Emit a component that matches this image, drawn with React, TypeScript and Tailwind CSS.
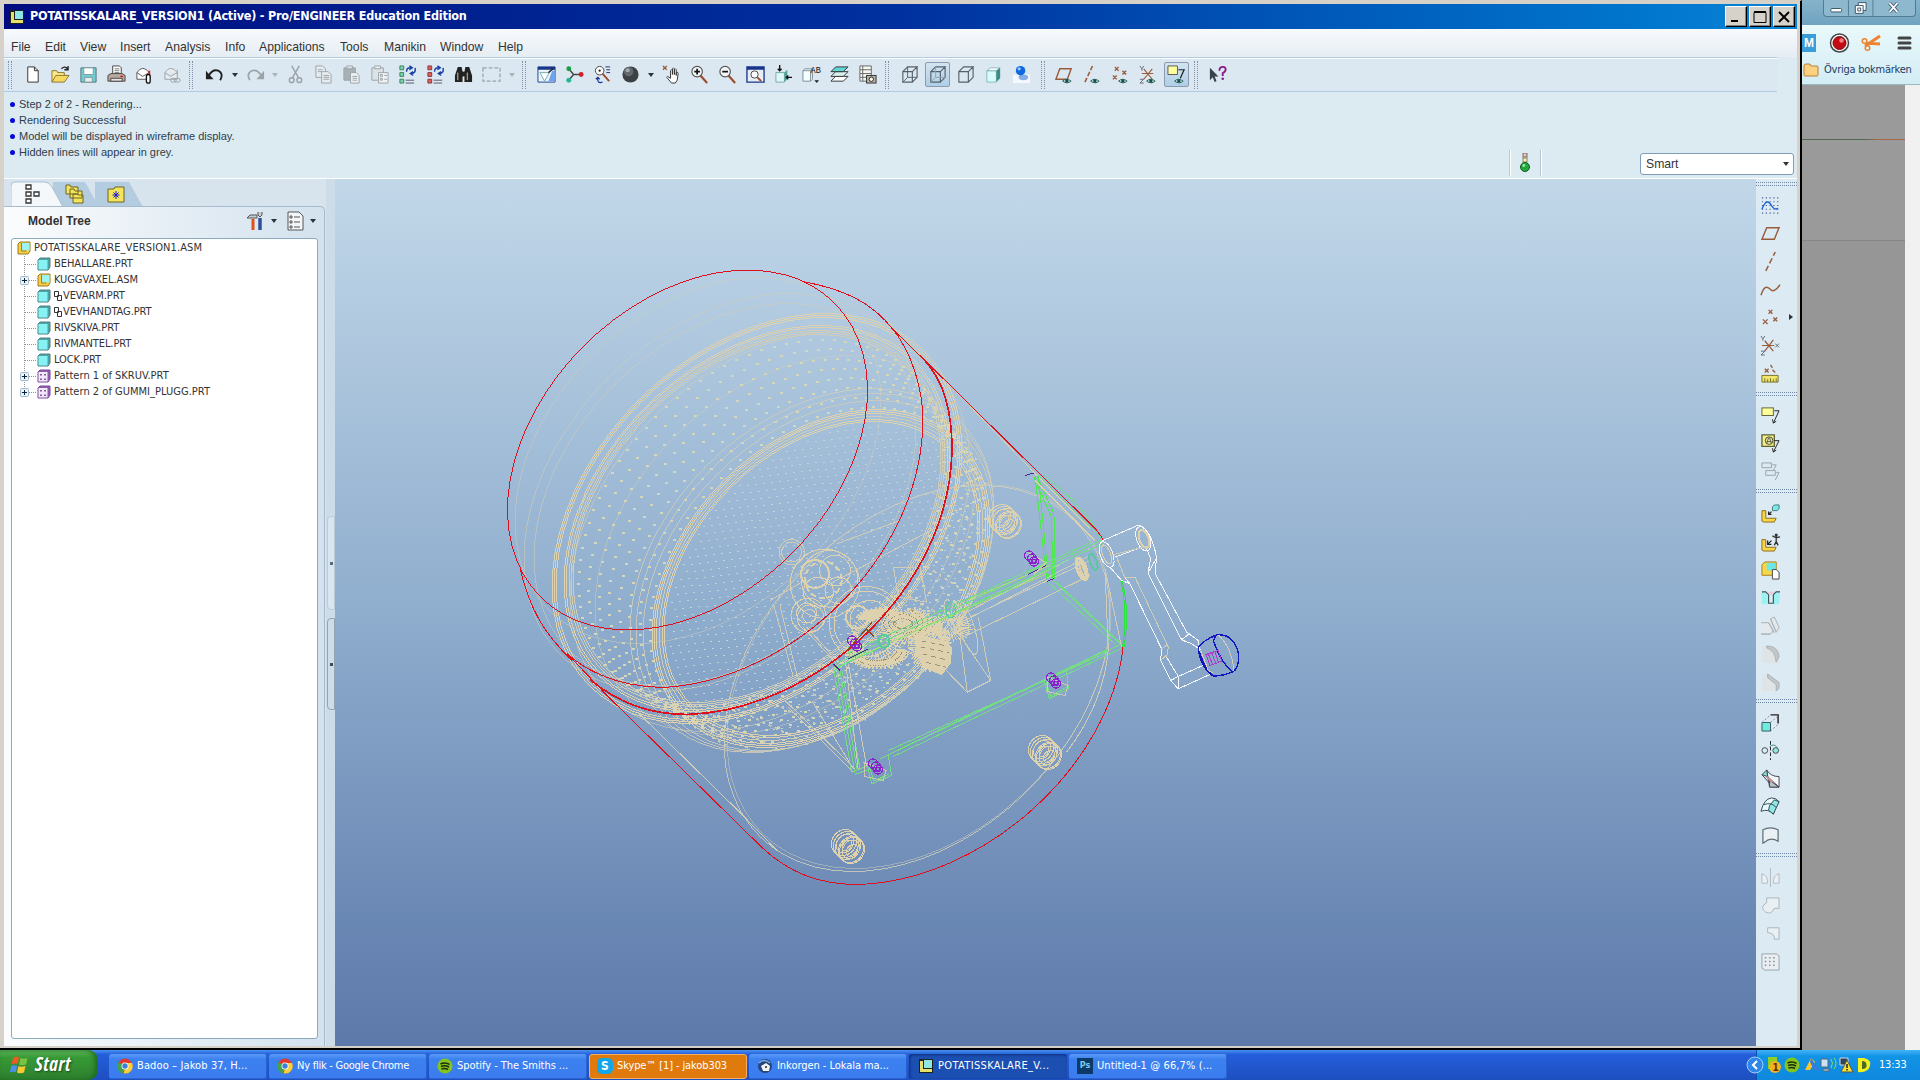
import type { ReactNode } from 'react';
import clsx from 'clsx';

/* ---------- Icons, all on a 20x20 grid ---------- */

const GREY = '#9aa3a8';
const DARK = '#2c3338';
const BROWN = '#9a5b3a';

const Eye = () => (
  <g>
    <path d="M8 17q4-4 9 0q-4 3.500-9 0z" fill="#cfe9e6" stroke="#2f5f5c" strokeWidth="1" />
    <circle cx="12.500" cy="16.800" r="1.800" fill="#12504c" stroke="none" />
  </g>
);

const Glass = ({ sign }: { sign: string }) => (
  <g>
    <path d="M11 11l7 8" stroke="#9c4a2c" strokeWidth="2.200" />
    <circle cx="7.500" cy="7" r="5.500" fill="#f3f6f8" stroke="#555" strokeWidth="1.200" />
    <path d={sign} stroke="#111" strokeWidth="1.800" />
  </g>
);

const Cube = () => <path d="M3 7h10v11H3zM3 7l5-5h10l-5 5M18 2v11l-5 5" stroke="#566069" strokeWidth="1.200" />;

const Bracket = () => (
  <path d="M1 7h4v8h11l-2 4H3l-2-1z" fill="#f7d648" stroke="#8f6a18" />
);

const icons: Record<string, ReactNode> = {
  new: <path d="M5 2h7l4 4v12H5zM12 2v4h4" fill="#fff" stroke="#333" />,
  open: (
    <g>
      <path d="M1 18V6h5l1 2h7v3" fill="#fbe98a" stroke="#8b7430" />
      <path d="M1 18l4-7h14l-5 7z" fill="#f6d95e" stroke="#8b7430" />
      <path d="M11 4q4-4 7 1m0-4v4h-4" stroke="#222" strokeWidth="1.400" />
    </g>
  ),
  save: (
    <g>
      <path d="M2 3h16v15H2z" fill="#6fd0cf" stroke="#55727a" />
      <path d="M5 3h10v7H5z" fill="#fff" stroke="#7d9aa0" />
      <path d="M6 13h8v5H6z" fill="#e8eef0" stroke="#7d9aa0" />
    </g>
  ),
  print: (
    <g>
      <path d="M6 1h7l2 2v7H6z" fill="#fff" stroke="#444" />
      <path d="M8 4h5M8 6h5M8 8h5" stroke="#777" />
      <path d="M1 11l3-2h12l3 2v6H1z" fill="#b5aaa2" stroke="#4c4440" />
      <path d="M4 14h12v3H4z" fill="#e8e4e0" stroke="#4c4440" />
      <path d="M14 12h3" stroke="#d02020" strokeWidth="1.500" />
    </g>
  ),
  mail: (
    <g>
      <path d="M2 8q6-9 13 0v7H2z" fill="#fff" stroke="#555" />
      <path d="M2 8l6 4 7-4" stroke="#555" />
      <path d="M15 6v5" stroke="#d02020" strokeWidth="2" />
      <rect x="12" y="10" width="4" height="9" rx="2" fill="#fff" stroke="#111" strokeWidth="1.400" />
    </g>
  ),
  mailLink: (
    <g stroke={GREY}>
      <path d="M2 8q6-9 13 0v7H2zM2 8l6 4 7-4M15 5v5" fill="#e6ecf0" />
      <rect x="8" y="14" width="6" height="4" rx="2" />
      <rect x="12" y="14" width="6" height="4" rx="2" />
    </g>
  ),
  undo: (
    <g>
      <path d="M4 11q4-7 10-5q6 3 2 10" stroke="#222" strokeWidth="2" />
      <path d="M1 6v9h8z" fill="#222" />
    </g>
  ),
  redo: (
    <g>
      <path d="M16 11q-4-7-10-5q-6 3-2 10" stroke={GREY} strokeWidth="1.800" />
      <path d="M19 6v9h-8z" fill={GREY} />
    </g>
  ),
  cut: (
    <g stroke={GREY} strokeWidth="1.500">
      <path d="M6 1l7 12M14 1L7 13" />
      <circle cx="6" cy="16" r="2.500" />
      <circle cx="14" cy="16" r="2.500" />
    </g>
  ),
  copy: (
    <g stroke={GREY} fill="#e6ecf0">
      <path d="M2 1h7l3 3v9H2z" />
      <path d="M8 7h7l3 3v9H8zM10 11h6M10 13h6M10 15h6M4 5h5M4 7h4" />
    </g>
  ),
  paste: (
    <g stroke={GREY}>
      <path d="M2 3h12v13H2z" fill="#a9b0b4" />
      <path d="M5 1h6v3H5z" fill="#dde4e8" />
      <path d="M9 8h6l3 3v8H9zM11 12h5M11 14h5M11 16h5" fill="#eef2f5" />
    </g>
  ),
  pasteSpecial: (
    <g stroke={GREY}>
      <path d="M2 3h12v13H2z" fill="#dce3e8" />
      <path d="M5 1h6v3H5zM9 8h10v11H9z" fill="#eef2f5" />
      <path d="M11 10h2v2h-2zM11 14h2v2h-2zM15 11h3M15 15h3" />
    </g>
  ),
  regen: (
    <g>
      <path d="M2 1h4v4H2zM2 8h4v4H2zM2 15h4v4H2z" fill="#7fd0b4" stroke="#385" />
      <path d="M8 16h9M8 19h9" stroke="#556" />
      <path d="M9 7q0-5 5-4m-2-2l3 2-3 2M18 3q1 6-4 6m2 2l-3-2 3-2" stroke="#1a3fa0" strokeWidth="1.500" />
    </g>
  ),
  regenAll: (
    <g>
      <path d="M2 1h4v4H2zM2 8h4v4H2zM2 15h4v4H2z" fill="#e06060" stroke="#833" />
      <path d="M8 16h9M8 19h9" stroke="#556" />
      <path d="M9 7q0-5 5-4m-2-2l3 2-3 2M18 3q1 6-4 6m2 2l-3-2 3-2" stroke="#1a3fa0" strokeWidth="1.500" />
    </g>
  ),
  find: (
    <g fill="#222">
      <path d="M4 2h4l1 5v11H1v-7z" />
      <path d="M12 2h4l3 9v7h-8V7z" />
      <path d="M8 7h4v5H8z" />
      <path d="M4 8v8M14 8v8" stroke="#cfcab0" />
    </g>
  ),
  select: <path d="M1 3h18v14H1z" stroke={GREY} strokeDasharray="4 2" strokeWidth="1.300" />,
  repaint: (
    <g>
      <path d="M1 2h18v16H1z" fill="#eaf4ff" stroke="#1c3f93" />
      <path d="M1 2h18v3H1z" fill="#17368a" />
      <path d="M16 6h3v11h-7z" fill="#6ea2ea" />
      <path d="M3 8l10 0-5 9z" fill="#fff" stroke="#7aa" />
      <path d="M12 8l5-4" stroke="#222" strokeWidth="1.500" />
    </g>
  ),
  spin: (
    <g>
      <path d="M4 4l5 6h7M9 10l-5 6" stroke="#444" strokeWidth="1.500" />
      <circle cx="4" cy="4" r="2.600" fill="#19a040" />
      <circle cx="17" cy="10" r="2.600" fill="#d2202c" />
      <circle cx="4" cy="16" r="2.600" fill="#22b59a" />
    </g>
  ),
  orient: (
    <g>
      <circle cx="7" cy="6" r="4.500" fill="#fff" stroke="#444" />
      <circle cx="7" cy="6" r="1.200" fill="#222" />
      <path d="M10 9l7 8" stroke="#9c4a2c" strokeWidth="2" />
      <path d="M13 2h5M14 5h4M14 8h4" stroke="#236" />
      <path d="M10 18q-6 2-5-5m-2 2l2-2 2 2" stroke="#1a2fa0" strokeWidth="1.300" />
    </g>
  ),
  ball: (
    <g>
      <circle cx="10" cy="10" r="8.500" fill="#3d4146" />
      <circle cx="8" cy="7" r="5" fill="#63686d" />
      <circle cx="7" cy="5.500" r="2.200" fill="#a5aaae" />
    </g>
  ),
  hand: (
    <g>
      <path d="M6 12l3 2V6q1-2 2 0v4-6q1-2 2 0v6-5q1-2 2 0v6-3q2-1 2 1l-1 7-2 3H10l-5-6z" fill="#fff" stroke="#333" />
      <path d="M1 1l4 4M5 1L1 5" stroke={BROWN} strokeWidth="1.400" />
    </g>
  ),
  zoomIn: <Glass sign="M4.500 7h6M7.500 4v6" />,
  zoomOut: <Glass sign="M4.500 7h6" />,
  refit: (
    <g>
      <path d="M1 2h18v16H1z" fill="#e8eef4" stroke="#17368a" strokeWidth="1.400" />
      <path d="M1 2h18v3H1z" fill="#17368a" />
      <circle cx="9" cy="10" r="3.800" fill="#fff" stroke="#444" />
      <path d="M12 13l4 4" stroke="#9c4a2c" strokeWidth="2" />
    </g>
  ),
  named: (
    <g>
      <path d="M2 8h9v10H2z" fill="#dff7f5" stroke="#7aa" />
      <path d="M11 8l3-3v10l-3 3z" fill="#4aa59b" />
      <path d="M6 0v6m-2-2l2 2 2-2M19 13h-6m2-2l-2 2 2 2" stroke="#111" strokeWidth="1.400" />
    </g>
  ),
  views: (
    <g>
      <path d="M1 6h8v11H1zM1 6l2-2h8l-2 2M11 4v11l-2 2" fill="#f4ffff" stroke="#7a8a90" />
      <text x="9" y="8" fontSize="9" fill="#111" fontFamily="Liberation Mono, monospace">AB</text>
      <path d="M13 16h5l-2.500 3z" fill="#222" />
    </g>
  ),
  layers: (
    <g stroke="#333">
      <path d="M1 17l5-5h13l-5 5z" fill="#fff" />
      <path d="M1 12l5-5h13l-5 5z" fill="#d9efee" />
      <path d="M1 7l5-5h13l-5 5z" fill="#5fd6d6" />
    </g>
  ),
  viewMgr: (
    <g>
      <path d="M2 1h12v16H2zM2 5h12M2 9h12M2 13h12M5 1v16" fill="#f7f7f2" stroke="#666" />
      <rect x="9" y="11" width="10" height="8" fill="#b8b2a2" stroke="#333" />
      <circle cx="14" cy="15" r="2.300" fill="#fff" stroke="#222" />
    </g>
  ),
  wire: (
    <g>
      <Cube />
      <path d="M3 18l5-5h10M8 2v11" stroke="#566069" />
    </g>
  ),
  hidden: (
    <g>
      <Cube />
      <path d="M3 18l5-5h10M8 2v11" stroke="#8fa2b2" />
    </g>
  ),
  noHidden: <Cube />,
  shaded: (
    <g>
      <path d="M3 6h10v12H3z" fill="#d9fbfa" stroke="#8bb" />
      <path d="M3 6l4-3h10l-4 3z" fill="#fff" stroke="#8bb" />
      <path d="M13 6l4-3v11l-4 4z" fill="#3d8d84" />
    </g>
  ),
  realism: (
    <g>
      <path d="M1 10h18v9H1z" fill="#f4f9ff" />
      <ellipse cx="12" cy="13" rx="5" ry="3" fill="#86aee6" />
      <circle cx="9" cy="6" r="5" fill="#0f68e0" />
      <circle cx="7.500" cy="4" r="1.700" fill="#9cc8ff" />
    </g>
  ),
  planeEye: (
    <g>
      <path d="M1 15L5 4h12l-4 11z" stroke={BROWN} strokeWidth="1.500" />
      <Eye />
    </g>
  ),
  axisEye: (
    <g>
      <path d="M2 18L10 1" stroke={BROWN} strokeWidth="1.600" strokeDasharray="5 2" />
      <Eye />
    </g>
  ),
  pointEye: (
    <g>
      <path d="M4 2l4 4m0-4L4 6M12 6l4 4m0-4l-4 4M2 11l4 4m0-4l-4 4" stroke={BROWN} strokeWidth="1.400" />
      <Eye />
    </g>
  ),
  csysEye: (
    <g>
      <path d="M3 9h12M5 4l9 11M14 4L5 15" stroke={BROWN} strokeWidth="1.200" />
      <path d="M1 1l2 3 2-3M3 4v2M1 15h4l-4 4h4" stroke="#667" />
      <Eye />
    </g>
  ),
  noteEye: (
    <g>
      <path d="M1 1h10v9H1z" fill="#ffffa0" stroke="#555" />
      <path d="M12 5h6l-4 9" stroke="#222" strokeWidth="1.300" />
      <Eye />
    </g>
  ),
  help: (
    <g>
      <path d="M2 3v13l3-3 2 5 2-1-2-5h4z" fill="#38424c" />
      <path d="M12 6q0-4 3.500-4q3.500 0 3 3.500q-1 2-3 3v3" stroke="#8a1d8a" strokeWidth="2" />
      <circle cx="15.500" cy="14.500" r="1.400" fill="#8a1d8a" />
    </g>
  ),
  sketch: (
    <g>
      <path d="M1 2h18M1 6h18M1 10h18M1 14h18M1 18h18" stroke="#3e5590" strokeDasharray="1.200 2.800" strokeWidth="1.200" />
      <path d="M1 14q5-13 10-4q3 5 7 3" stroke="#1f66cf" strokeWidth="1.500" />
    </g>
  ),
  plane: <path d="M1 16L6 4h13l-5 12z" stroke={BROWN} strokeWidth="1.500" />,
  axis: <path d="M5 20L15 0" stroke={BROWN} strokeWidth="1.600" strokeDasharray="6 3" />,
  curve: <path d="M0 16q4-13 10-6q4 4 10-5" stroke={BROWN} strokeWidth="1.500" />,
  points: <path d="M8 2l4 4m0-4L8 6M13 10l4 4m0-4l-4 4M2 12l5 5m0-5l-5 5" stroke={BROWN} strokeWidth="1.400" />,
  csys: (
    <g>
      <path d="M1 10h13M4 5l9 11M13 4L4 16" stroke={BROWN} strokeWidth="1.300" />
      <path d="M0 0l2 3 2-3M2 3v2M0 16h4l-4 4h4M15 8l4 4m0-4l-4 4" stroke="#667" />
    </g>
  ),
  analysis: (
    <g>
      <path d="M4 5l4 4m0-4L4 9M10 1l2 3M12 6l3 3" stroke={BROWN} strokeWidth="1.400" />
      <path d="M1 12h17v7H1z" fill="#efe66a" stroke="#77702a" />
      <path d="M4 19v-4M7 19v-3M10 19v-4M13 19v-3M16 19v-4" stroke="#77702a" />
    </g>
  ),
  note: (
    <g>
      <rect x="1" y="2" width="12" height="8" fill="#ffff9c" stroke="#5f6030" />
      <path d="M14 5h5l-6 13m-1-4l1 4 3-2" stroke="#222" />
    </g>
  ),
  noteSym: (
    <g>
      <path d="M1 1h13v12H1z" fill="#f1f08a" stroke="#5f6030" strokeWidth="1.400" />
      <circle cx="8.500" cy="7" r="4" stroke="#444" />
      <path d="M8 4l-2 6M9 4l2 6M6 8h5" stroke="#555" />
      <path d="M14 7h5l-6 12m-1-4l1 4 3-2" stroke="#222" />
    </g>
  ),
  noteOff: <path d="M1 1h10v5H1zM12 3h4l-3 6M5 9h10v5H5zM16 11h3l-4 8" stroke={GREY} />,
  assemble: (
    <g>
      <Bracket />
      <path d="M12 3l2-2h5v4l-2 2h-5z" fill="#7fe5e5" stroke="#3d7d7d" />
      <path d="M11 8l-3 3m0-3v3h3" stroke="#222" strokeWidth="1.300" />
    </g>
  ),
  manikin: (
    <g>
      <Bracket />
      <circle cx="16" cy="2" r="1.600" fill="#333" />
      <path d="M16 3v6M12 3l4 2 4-1M14 13l2-4 2 4" stroke="#333" strokeWidth="1.400" />
      <path d="M11 8l-4 4m0-4v4h4" stroke="#222" strokeWidth="1.300" />
    </g>
  ),
  create: (
    <g>
      <path d="M1 4l3-3h12v10l-3 4H1z" fill="#f7d648" stroke="#a87a18" />
      <path d="M6 2h9v8H6z" fill="#6fe6e8" />
      <path d="M12 9h4l3 3v7h-7z" fill="#fff" stroke="#444" />
    </g>
  ),
  hole: (
    <g>
      <path d="M0 4h7v12H1zM13 4h7l-1 12h-6z" fill="#9ff0f0" />
      <path d="M1 3h4l3 3v9h5V6l3-3h4" stroke="#355" strokeWidth="1.200" />
      <path d="M6 3h8l-2 3H9z" fill="#f0c8dc" />
    </g>
  ),
  shell: <path d="M0 6h8l5 8-3 4H0M0 18h10M10 2l4-2 5 11-3 5zM8 6l6 11M10 2l6 14" stroke="#a9b1b4" fill="#e3e9ec" />,
  round: (
    <g>
      <path d="M1 1h6q12 2 12 18H1z" fill="#dfe5e7" />
      <path d="M6 1q12 0 13 11l-3 6q-1-12-10-15z" fill="#c2c8ca" stroke="#a9b1b4" />
    </g>
  ),
  chamfer: (
    <g>
      <path d="M1 1h6l12 12v6H1z" fill="#dfe5e7" />
      <path d="M7 1l12 9v6l-3 3v-7L7 5z" fill="#c2c8ca" stroke="#a9b1b4" />
    </g>
  ),
  extrude: (
    <g>
      <path d="M1 10h9v9H1z" fill="#74e8de" stroke="#2c5f5c" />
      <path d="M10 2h8v9" stroke="#222" strokeWidth="1.500" />
      <path d="M1 10l9-8M10 10l8-7M10 19l8-7" stroke="#8b7b9b" strokeDasharray="2 2" />
    </g>
  ),
  revolve: (
    <g stroke="#444">
      <circle cx="4" cy="10" r="3" />
      <circle cx="15.500" cy="10" r="3" fill="#8feae0" />
      <path d="M10 0v20" strokeDasharray="4 2" stroke="#222" />
      <path d="M9 6q5-4 8 1" stroke="#487" />
    </g>
  ),
  sweep: (
    <g stroke="#445">
      <path d="M6 1q4 7 13 7v11H9z" fill="#f2f7f8" />
      <path d="M9 12l10 7H9z" fill="#b9c6c6" />
      <path d="M1 6l5-5 1 7z" fill="#7fe0d8" />
      <path d="M1 6l8 9M7 8l12 11" />
      <path d="M6 8l6 6" stroke="#d09090" strokeWidth="2" />
    </g>
  ),
  boundary: (
    <g stroke="#345">
      <path d="M0 15q3-13 11-14q5 0 8 4q-4 4-6 13q-5-6-13-3z" fill="#e8fbfa" />
      <path d="M9 9l5-6 5 2-6 13-5-4z" fill="#8fe8e4" />
      <path d="M3 8q8-3 13 3" />
    </g>
  ),
  style: <path d="M2 4q8-4 16 0v12q-8-5-14 1l-2 1z" stroke="#5f6f76" strokeWidth="1.300" fill="#e9f1f5" />,
  mirror: <path d="M10 0v20M7 16H1V6q6 1 6 10zM13 16h6V6q-6 1-6 10z" stroke="#b1bac0" fill="#eaf0f4" />,
  merge: <path d="M6 2h13v11h-5q-3 7-9 4q-7-5 1-10z" stroke="#aab3b8" fill="#e9f0f4" />,
  trim: <path d="M7 4h12v12h-5q1-6-7-7z" stroke="#aab3b8" fill="#e9f0f4" />,
  pattern: (
    <g>
      <path d="M1 2h15l3 2v15H4l-3-2z" fill="#e8eef1" stroke="#9aa3a8" />
      <path d="M4 6h11M4 10h11M4 14h11" stroke="#8a9398" strokeWidth="1.600" strokeDasharray="1.600 2.800" />
    </g>
  ),
};

function Icon({ name }: { name: string }) {
  return (
    <svg viewBox="0 0 20 20" fill="none" className="size-[19px] shrink-0 overflow-visible">
      {icons[name]}
    </svg>
  );
}

/* ---------- Title bar and menus ---------- */

function WinButton({ children }: { children: ReactNode }) {
  return (
    <div className="flex h-[21px] w-[22px] items-center justify-center border border-t-white border-l-white border-r-black border-b-black bg-[#d6d2ca] shadow-[inset_-1px_-1px_0_#808080]">
      <svg viewBox="0 0 14 14" className="size-[14px]" fill="none" stroke="#000">
        {children}
      </svg>
    </div>
  );
}

function TitleBar() {
  return (
    <div className="flex h-[25px] items-center bg-linear-to-r from-[#000b80] via-[#00309f] via-50% to-[#0b84d6] pr-[2px] pl-[6px]">
      <svg viewBox="0 0 14 14" className="size-[14px]">
        <path d="M0 0h14v14H0z" fill="#1c2320" />
        <path d="M1 2h3v8h9v3H1z" fill="#e9e06a" />
        <path d="M5 1h8v8H5z" fill="#8fe6e2" />
      </svg>
      <span className="ml-[6px] font-['DejaVu_Sans_Condensed','DejaVu_Sans',sans-serif] text-[12.5px] font-bold tracking-[-0.21px] whitespace-nowrap text-white [font-stretch:condensed]">
        POTATISSKALARE_VERSION1 (Active) - Pro/ENGINEER Education Edition
      </span>
      <div className="ml-auto flex gap-[2px]">
        <WinButton>
          <path d="M2 11h7" strokeWidth="2" />
        </WinButton>
        <WinButton>
          <path d="M1 2.500h12v10H1z" />
          <path d="M1 2h12" strokeWidth="2" />
        </WinButton>
        <WinButton>
          <path d="M2 2l10 10M12 2L2 12" strokeWidth="2" />
        </WinButton>
      </div>
    </div>
  );
}

function MenuBar() {
  return (
    <div className="flex h-[28px] items-center bg-linear-to-b from-[#f7fafd] to-[#e6edf3] pt-[8px] pl-[7px] text-[12.2px] text-[#333]">
      <span className="w-[34px]">File</span>
      <span className="w-[35px]">Edit</span>
      <span className="w-[40px]">View</span>
      <span className="w-[45px]">Insert</span>
      <span className="w-[60px]">Analysis</span>
      <span className="w-[34px]">Info</span>
      <span className="w-[81px]">Applications</span>
      <span className="w-[44px]">Tools</span>
      <span className="w-[56px]">Manikin</span>
      <span className="w-[58px]">Window</span>
      <span>Help</span>
    </div>
  );
}

/* ---------- Toolbar ---------- */

const Grip = ({ className }: { className?: string }) => (
  <div className={clsx('h-[28px] w-[4px] shrink-0 border-x border-dotted border-[#7f90a8]', className)} />
);

function ToolButton({ name, active }: { name: string; active?: boolean }) {
  return (
    <div className="flex h-[28px] w-[28px] shrink-0 items-center justify-center">
      <div
        className={clsx(
          'flex size-[25px] items-center justify-center',
          active && 'rounded-[2px] border border-[#8b9bab] bg-linear-to-b from-[#d3e4f0] to-[#aecfe8]',
        )}
      >
        <Icon name={name} />
      </div>
    </div>
  );
}

const Caret = ({ className, muted }: { className?: string; muted?: boolean }) => (
  <div className={clsx('flex shrink-0 justify-center', className)}>
    <svg viewBox="0 0 6 4" className="h-[4px] w-[6px]">
      <path d="M0 0h6L3 4z" fill={muted ? '#a9b3ba' : DARK} />
    </svg>
  </div>
);

function Toolbar() {
  const group = (names: string[]) => names.map((n) => <ToolButton key={n} name={n} />);
  return (
    <div className="mr-[20px] flex h-[35px] items-center border-y border-[#b3cbe0] bg-[#dbe8f1] pl-[4px] shadow-[inset_0_1px_0_#fff,0_1px_0_#fff]">
      <Grip className="mr-[6px]" />
      {group(['new', 'open', 'save', 'print', 'mail', 'mailLink'])}
      <Grip className="mr-[7px] ml-[3px]" />
      <ToolButton name="undo" />
      <Caret className="w-[13px]" />
      <ToolButton name="redo" />
      <Caret className="w-[12px]" muted />
      {group(['cut', 'copy', 'paste', 'pasteSpecial', 'regen', 'regenAll', 'find', 'select'])}
      <Caret className="w-[13px]" muted />
      <Grip className="mr-[6px] ml-[4px]" />
      {group(['repaint', 'spin', 'orient', 'ball'])}
      <Caret className="w-[13px]" />
      {group(['hand', 'zoomIn', 'zoomOut', 'refit', 'named', 'views', 'layers', 'viewMgr'])}
      <Grip className="mr-[6px] ml-[4px]" />
      <ToolButton name="wire" />
      <ToolButton name="hidden" active />
      {group(['noHidden', 'shaded', 'realism'])}
      <Grip className="mr-[5px] ml-[6px]" />
      {group(['planeEye', 'axisEye', 'pointEye', 'csysEye'])}
      <ToolButton name="noteEye" active />
      <Grip className="mr-[5px] ml-[4px]" />
      <ToolButton name="help" />
    </div>
  );
}

const messages = [
  'Step 2 of 2 - Rendering...',
  'Rendering Successful',
  'Model will be displayed in wireframe display.',
  'Hidden lines will appear in grey.',
];

function MessageArea() {
  return (
    <div className="flex h-[86px] justify-between bg-[#dceaf2]">
      <ul className="pt-[4px] pl-[6px] text-[11px] leading-4 text-[#2d3d4d]">
        {messages.map((m) => (
          <li key={m} className="flex items-center gap-[4px]">
            <span className="size-[5px] rounded-full bg-[#0a0ad8]" />
            {m}
          </li>
        ))}
      </ul>
      <div className="flex items-end pr-[3px]">
        <div className="mr-[99px] mb-[2px] flex h-[26px] w-[32px] items-center justify-center border-x border-[#b4c8d6] shadow-[1px_0_0_#fff,inset_1px_0_0_#fff]">
          <svg viewBox="0 0 10 20" className="h-[20px] w-[10px]">
            <rect x="3" y="0" width="4" height="4" fill="#d8c8bc" stroke="#866" />
            <rect x="3" y="5" width="4" height="4" fill="#f6f0b0" stroke="#886" />
            <circle cx="5" cy="14" r="4.500" fill="#22a83c" stroke="#115a20" />
            <circle cx="3.800" cy="12.500" r="1.400" fill="#9be8a4" />
          </svg>
        </div>
        <div className="mb-[3px] flex h-[22px] w-[154px] items-center justify-between rounded-[3px] border border-[#7f9db9] bg-white pr-[4px] pl-[5px] text-[12.2px] text-[#333]">
          Smart
          <Caret />
        </div>
      </div>
    </div>
  );
}

/* ---------- Model tree ---------- */

const PartIcon = () => (
  <svg viewBox="0 0 14 14" className="size-[14px] shrink-0">
    <path d="M1 3l2-2h10v9l-2 3H1z" fill="#4aa5a3" stroke="#4f7f84" />
    <path d="M1.500 3h9v9.500h-9z" fill="#86f2f4" />
  </svg>
);

const AsmIcon = () => (
  <svg viewBox="0 0 14 14" className="size-[14px] shrink-0">
    <path d="M1 3l2-2h10v9l-2 3H1z" fill="#f3cf45" stroke="#9c7a1c" />
    <path d="M4.500 2h8v7.500h-8z" fill="#9df3ef" />
    <path d="M4.500 2v8h5" stroke="#b07a18" fill="none" />
  </svg>
);

const PatternIcon = () => (
  <svg viewBox="0 0 14 14" className="size-[14px] shrink-0">
    <path d="M1 3l2-2h10v9l-2 3H1z" fill="#8d5fae" stroke="#7a4a9a" />
    <path d="M1.500 3h9v9.500h-9z" fill="#f3e8fa" />
    <path d="M4 5v6M8 5v6" stroke="#5a2f80" strokeWidth="1.500" strokeDasharray="1.500 3" />
  </svg>
);

type Node = { label: string; kind: 'part' | 'asm' | 'pattern'; expandable?: boolean; packaged?: boolean };

const nodes: Node[] = [
  { label: 'BEHALLARE.PRT', kind: 'part' },
  { label: 'KUGGVAXEL.ASM', kind: 'asm', expandable: true },
  { label: 'VEVARM.PRT', kind: 'part', packaged: true },
  { label: 'VEVHANDTAG.PRT', kind: 'part', packaged: true },
  { label: 'RIVSKIVA.PRT', kind: 'part' },
  { label: 'RIVMANTEL.PRT', kind: 'part' },
  { label: 'LOCK.PRT', kind: 'part' },
  { label: 'Pattern 1 of SKRUV.PRT', kind: 'pattern', expandable: true },
  { label: 'Pattern 2 of GUMMI_PLUGG.PRT', kind: 'pattern', expandable: true },
];

function TreeRow({ node, last }: { node: Node; last: boolean }) {
  return (
    <li className="flex h-4 items-center">
      <svg viewBox="0 0 24 16" className="h-4 w-[24px] shrink-0" fill="none">
        <path d={last ? 'M11.500 0v8M12 8.500h12' : 'M11.500 0v16M12 8.500h12'} stroke="#8a949c" strokeDasharray="1 1" />
        {node.expandable && (
          <g>
            <rect x="7.500" y="4.500" width="8" height="8" rx="1" fill="#e8f3fa" stroke="#9db8cc" />
            <path d="M9 8.500h5M11.500 6v5" stroke="#123" />
          </g>
        )}
      </svg>
      {node.kind === 'part' && <PartIcon />}
      {node.kind === 'asm' && <AsmIcon />}
      {node.kind === 'pattern' && <PatternIcon />}
      {node.packaged && (
        <svg viewBox="0 0 9 10" className="ml-[2px] h-[10px] w-[9px]" fill="none" stroke="#333">
          <path d="M1.500 .5h4v5h-4zM4.500 4.500h4v5h-4z" />
        </svg>
      )}
      <span
        className={clsx(
          node.packaged ? 'ml-px' : 'ml-[3px]',
          node.kind === 'pattern' ? 'tracking-[0.02px]' : 'tracking-[-0.08px]',
        )}
      >
        {node.label}
      </span>
    </li>
  );
}

function ModelTree() {
  return (
    <aside className="flex w-[322px] flex-col bg-[#d7e4ee] pt-[2px]">
      <div className="h-[25px] pl-[7px]">
        <svg viewBox="0 0 310 26" className="h-[26px] w-[310px]">
          <path d="M84 1h34l14 25H84z" fill="#b4cce0" />
          <path d="M42 1h32l14 25H42z" fill="#b4cce0" />
          <path d="M0 26V5q0-4 4-4h30q4 0 7 5l11 20z" fill="#f4f8fb" stroke="#a9c1d4" />
          <g fill="#fff" stroke="#333" strokeWidth="1.300">
            <path d="M15 4h5v4h-5zM15 11h5v4h-5zM15 18h5v4h-5zM23 11h5v4h-5z" />
          </g>
          <g fill="#f4e45c" stroke="#6e6420">
            <path d="M55 4h4l1 2h7v7H55zM59 8h4l1 2h7v7H59zM62 13h4l1 1h5v8H62z" />
            <path d="M97 8h6l1-2h9v15H97z" />
          </g>
          <path d="M105 10v8M101.500 14h7M102.500 11.500l5 5M107.500 11.500l-5 5" stroke="#1b1bd0" />
        </svg>
      </div>
      <div className="mr-[1px] flex min-h-0 flex-1 flex-col rounded-tr-[5px] border-t border-r border-[#a6bccd] bg-linear-to-r from-[#fbfcfd] to-[#d3e2ee] pl-[7px]">
        <div className="flex h-[31px] items-center pb-[4px] pl-[17px]">
          <span className="text-[12px] font-bold text-[#333]">Model Tree</span>
          <svg viewBox="0 0 18 20" className="ml-auto h-[20px] w-[18px]" fill="none">
            <path d="M6 8v11" stroke="#e0501c" strokeWidth="3" />
            <path d="M13 7v12" stroke="#2f4f9e" strokeWidth="3.500" />
            <path d="M0 7l3-3h7v3H0zM11 1v3l2 2 2-2V1" stroke="#555" fill="#c7cdd2" />
          </svg>
          <Caret className="ml-[4px] w-[10px]" />
          <svg viewBox="0 0 17 20" className="ml-[8px] h-[20px] w-[17px]" fill="none" stroke="#555">
            <path d="M1 1h11l4 4v14H1z" fill="#f2f6f9" />
            <path d="M3 5h2v2H3zM3 10h2v2H3zM3 15h2v2H3zM7 6h6M7 11h6M7 16h6" />
          </svg>
          <Caret className="mr-[6px] ml-[4px] w-[10px]" />
        </div>
        <div className="mr-[6px] mb-[7px] flex-1 rounded-[3px] border border-[#8aaac2] bg-white pt-px pl-[5px]">
          <ul className="font-['DejaVu_Sans_Condensed','DejaVu_Sans',sans-serif] text-[11px] whitespace-nowrap text-[#333] [font-stretch:condensed]">
            <li className="flex h-4 items-center gap-[3px] tracking-[0.1px]">
              <AsmIcon />
              POTATISSKALARE_VERSION1.ASM
            </li>
            <div className="-ml-[4px]">
              {nodes.map((n, i) => (
                <TreeRow key={n.label} node={n} last={i === nodes.length - 1} />
              ))}
            </div>
          </ul>
        </div>
      </div>
    </aside>
  );
}

function Splitter() {
  return (
    <div className="flex w-[9px] flex-col items-end bg-[#cddce9] pt-[337px]">
      <div className="flex h-[94px] w-[8px] items-center justify-center rounded-l-[4px] border border-[#bccbd8] bg-[#dae6ef]">
        <span className="size-[3px] bg-[#5a6a78]" />
      </div>
      <div className="mt-[8px] flex h-[92px] w-[8px] items-center justify-center rounded-l-[4px] border border-[#93a5b5] bg-[#cfdde8]">
        <span className="size-[3px] bg-[#3a4a58]" />
      </div>
    </div>
  );
}

/* ---------- Wireframe model ---------- */

const TAN = '#cfcdb8';
const SAND = '#ded1ad';
const RED = '#e00f1e';
const GREEN = '#74dc84';

// Every circle of the drum projects to the same ellipse, its long axis at 45 degrees
const RX = 1.1547;
const RY = 0.8165;

function Ring({ x, y, w, stroke = TAN, opacity }: { x: number; y: number; w: number; stroke?: string; opacity?: number }) {
  return (
    <ellipse
      cx={x}
      cy={y}
      rx={w * RX}
      ry={w * RY}
      transform={`rotate(-45 ${x} ${y})`}
      stroke={stroke}
      opacity={opacity}
    />
  );
}

function ringPoint(x: number, y: number, w: number, a: number) {
  const u = w * RX * Math.cos(a);
  const v = w * RY * Math.sin(a);
  return [x + (u + v) / Math.SQRT2, y + (v - u) / Math.SQRT2];
}

// Holes in the drum wall, between the outer and the inner ring
function wallDots() {
  let d = '';
  for (let i = 0; i < 92; i++) {
    const a = (i / 92) * Math.PI * 2;
    const [x1, y1] = ringPoint(757, 519, 184, a);
    const [x2, y2] = ringPoint(821, 578, 166, a);
    for (let k = 0; k < 8; k++) {
      const t = (k + 0.4) / 8;
      d += `M${Math.round(x1 + (x2 - x1) * t)} ${Math.round(y1 + (y2 - y1) * t)}h2.500`;
    }
  }
  return d;
}

// Rows of holes seen edge-on along the near side of the wall
function wallRows() {
  let d = '';
  for (let i = 0; i < 17; i++) {
    const [x1, y1] = ringPoint(757, 519, 186, 0.15 + i * 0.17);
    const [x2, y2] = ringPoint(821, 578, 172, 0.05 + i * 0.17);
    d += `M${x1} ${y1}L${x2} ${y2}`;
  }
  return d;
}

// Holes in the grating disc
function discDots() {
  let d = '';
  for (let r = -30; r <= 30; r++) {
    for (let c = -30; c <= 30; c++) {
      const dx = c * 8 + r * 2.4;
      const dy = r * 7 - c * 0.9;
      const u = (dx - dy) / Math.SQRT2 / (153 * RX);
      const v = (dx + dy) / Math.SQRT2 / (153 * RY);
      if (u * u + v * v < 1) d += `M${Math.round(821 + dx)} ${Math.round(578 + dy)}h2`;
    }
  }
  return d;
}

function gearTeeth(cx: number, cy: number, rx: number, ry: number, from: number, to: number, n: number, inner = 0.6) {
  let d = '';
  for (let i = 0; i <= n; i++) {
    const a = from + ((to - from) * i) / n;
    const c = Math.cos(a);
    const s = Math.sin(a);
    const o = i % 2 ? 1 : 0.9;
    d += `M${cx + rx * inner * c} ${cy + ry * inner * s}L${cx + rx * o * c} ${cy + ry * o * s}`;
  }
  return d;
}

function Plug({ x, y }: { x: number; y: number }) {
  return (
    <g stroke={SAND} transform={`translate(${x} ${y})`}>
      {[-4, -2, 0, 3, 4].map((o) => (
        <ellipse key={o} cx={o} cy={o} rx="12" ry="13.500" transform={`rotate(35 ${o} ${o})`} />
      ))}
      <ellipse cx="3" cy="3" rx="8" ry="10" transform="rotate(35 3 3)" />
      <ellipse cx="-3" cy="-3" rx="8" ry="10" transform="rotate(35 -3 -3)" />
      <ellipse cx="4" cy="4" rx="5" ry="7" transform="rotate(35 4 4)" />
      <ellipse cx="-1" cy="-1" rx="4" ry="6" transform="rotate(35 -1 -1)" />
    </g>
  );
}

function Screw({ x, y }: { x: number; y: number }) {
  return (
    <g stroke="#8a22cc" strokeWidth="1.400" transform={`translate(${x} ${y})`}>
      <circle cx="-3" cy="-3" r="4.500" />
      <circle cx="0" cy="0" r="4.500" />
      <circle cx="2" cy="3" r="4.500" />
      <circle cx="2" cy="3" r="2" />
    </g>
  );
}

function Model() {
  return (
    <svg viewBox="335 178.5 1422 868" className="block h-[868px] w-[1422px]" fill="none" strokeWidth="1" shapeRendering="crispEdges">
      {/* perforated drum */}
      <path d={wallDots()} stroke="#d3d8bd" strokeWidth="2" />
      <path d={wallRows()} stroke="#d6d2b6" strokeWidth="2" strokeDasharray="3 4" opacity="0.8" />
      <path d={discDots()} stroke="#c3d3d8" strokeWidth="1.500" />
      <Ring x={698} y={460} w={183} opacity={0.5} />
      <Ring x={723} y={492} w={199} opacity={0.55} />
      <Ring x={725} y={494} w={191} opacity={0.55} />
      {[205, 203, 201, 193, 191, 188, 186, 184].map((w) => (
        <Ring key={w} x={757} y={518} w={w} stroke={w % 2 ? SAND : TAN} />
      ))}
      {[169, 167, 165, 162, 159, 157].map((w) => (
        <Ring key={w} x={821} y={578} w={w} stroke={w % 2 ? SAND : TAN} />
      ))}
      <Ring x={770} y={531} w={200} opacity={0.6} />
      <Ring x={785} y={545} w={190} opacity={0.5} />
      <Ring x={812} y={570} w={182} opacity={0.8} />
      <Ring x={815} y={572} w={179} opacity={0.8} />
      <Ring x={818} y={575} w={175} opacity={0.8} />

      {/* lid, inner edge */}
      <Ring x={917} y={678} w={193} opacity={0.85} />
      <Ring x={919} y={676} w={192} opacity={0.5} />
      <path d="M638 712L740 812L777 850M887 320L1037 475L1090 528" stroke={TAN} />

      {/* shaft and gearbox */}
      <g transform="translate(770 520) scale(.3333)" className="[&_*]:[vector-effect:non-scaling-stroke]" stroke={TAN}>
        <path d="M580 280L960 85M585 300L960 105M590 345L960 165M600 290L960 120" />
        <path d="M10 250L70 470M30 255L80 460M0 240L95 185M125 540L250 745M100 320L200 430M110 320L210 430M180 190L500 20M200 70L390 0" />
        <path d="M370 140L385 230L470 245L450 140zM625 290L662 480L592 515L500 420M570 350L592 515M540 300L662 480" />
        <ellipse cx="590" cy="320" rx="22" ry="85" transform="rotate(-18 590 320)" />
        <ellipse cx="545" cy="285" rx="18" ry="50" transform="rotate(-18 545 285)" />
        <ellipse cx="570" cy="300" rx="22" ry="50" transform="rotate(-18 570 300)" />
        <circle cx="65" cy="95" r="38" />
        <circle cx="65" cy="95" r="30" />
        <g stroke={SAND}>
          <circle cx="165" cy="190" r="104" />
          <circle cx="178" cy="175" r="85" />
          <circle cx="135" cy="160" r="42" strokeWidth="2" />
          <circle cx="195" cy="150" r="46" />
          <circle cx="145" cy="215" r="45" />
          <circle cx="205" cy="210" r="40" />
          <circle cx="160" cy="178" r="55" strokeWidth="2" strokeDasharray="6 3" />
          <circle cx="115" cy="285" r="52" />
          <circle cx="122" cy="293" r="40" />
          <circle cx="110" cy="278" r="30" />
          <circle cx="118" cy="287" r="20" />
          <circle cx="290" cy="310" r="112" />
          <circle cx="290" cy="310" r="98" />
          <circle cx="262" cy="290" r="34" strokeWidth="2" />
          <circle cx="300" cy="300" r="60" />
          <path d={gearTeeth(315, 350, 85, 75, 0, 6.28, 44)} />
          <path d={gearTeeth(320, 385, 100, 62, 0.1, 3, 46, 0.55)} strokeWidth="2" />
          <path d={gearTeeth(335, 300, 80, 40, 3.3, 6.2, 32, 0.3)} strokeWidth="2" />
          <path d={gearTeeth(435, 310, 58, 50, 0, 6.28, 44, 0.2)} strokeWidth="1.500" />
          <path d={gearTeeth(420, 330, 100, 50, 0, 6.28, 50, 0.3)} />
          <path d="M435 340L530 365L545 385L540 430L515 462L460 440L440 400z" fill={SAND} />
          <path d={gearTeeth(480, 375, 66, 80, 0, 6.28, 60, 0.5)} strokeWidth="1.500" />
          <path d={gearTeeth(540, 320, 70, 45, 0, 6.28, 40, 0.4)} />
          <ellipse cx="935" cy="145" rx="13" ry="34" transform="rotate(-20 935 145)" strokeWidth="3" />
          <ellipse cx="937" cy="148" rx="5" ry="26" transform="rotate(-20 937 148)" strokeWidth="2" />
        </g>
        <path
          d={gearTeeth(320, 380, 104, 66, 0.3, 2.9, 30) + gearTeeth(400, 310, 90, 45, 0, 6.28, 36, 0.3)}
          stroke="#7d7458"
          strokeDasharray="1 4"
          opacity="0.7"
        />
        <path
          d="M455 362L530 376M452 380L538 396M458 400L535 420M468 425L528 440"
          stroke="#8d8464"
          strokeDasharray="5 4"
          opacity="0.8"
        />
      </g>

      {/* housing frame */}
      <g transform="translate(780 450) scale(.3333)" className="[&_*]:[vector-effect:non-scaling-stroke]" stroke={GREEN}>
        <path d="M765 75L800 385M775 75L805 380M770 75L822 190L825 385M762 80L815 200L818 385" stroke="#4ee84e" />
        <path d="M775 75L968 268M790 75Q900 150 970 270" />
        <path d="M765 90L945 270" stroke={SAND} />
        <path d="M965 270L165 640M970 278L175 650M935 275L200 610M820 352L160 655" />
        <path d="M800 370L230 620M810 345L560 450" stroke="#a4e070" />
        <path d="M805 395L1015 590M830 395L1022 578M815 385L1028 588" />
        <path d="M1022 390Q1045 480 1028 590M1026 390Q1050 480 1032 590" stroke="#2ee23c" />
        <path d="M985 595L330 910M1028 592L340 918M1025 580L300 925M985 605L325 900" />
        <path d="M160 650L215 965M168 645L225 968M178 650L232 960M185 655L240 955" />
        <path d="M195 620L235 960M205 640L260 950" stroke={TAN} />
        <path d="M215 965L265 945M225 972L270 955" />
        <path d="M262 945L275 1000L335 975L325 915M268 950L282 992L328 970" />
        <path d="M792 690L808 745L865 715L860 660M798 695L812 738L860 710" />
        <path d="M735 325L738 370L800 340M205 590L210 625L262 600" />
        <path d="M975 355L985 598Q970 760 860 905" stroke={TAN} />
        <path d="M975 355L1025 590M25 770L220 965M15 750L225 955" stroke={TAN} />
        <path d="M745 372L798 345M205 625L265 595M160 640l20 20M735 75l28-8M802 392l20-8" stroke="#4a2a88" />
        <ellipse cx="940" cy="335" rx="10" ry="26" transform="rotate(-20 940 335)" stroke="#58c8a0" strokeWidth="2" />
        <ellipse cx="312" cy="572" rx="16" ry="20" stroke="#58c8a0" strokeWidth="2" />
        <ellipse cx="512" cy="478" rx="14" ry="24" stroke="#58c8a0" />
      </g>

      {/* container outline */}
      <g stroke={RED}>
        <Ring x={687.5} y={449.5} w={180} stroke={RED} />
        <path d="M803 281C845 289 872 302 893 329C912 352 923 390 923 420C921 560 790 680 663 687C610 686 580 665 567 653" />
        <path d="M520 568C530 610 545 634 572 660" />
        <path d="M893 329L926 361" />
        <path d="M924 359C945 382 952 412 952 450C949 590 815 710 687 714C645 714 615 700 590 679" strokeWidth="1.700" />
        <path d="M567 653L606 694L762 847C790 873 820 884 858 884C985 880 1110 765 1123 647" />
        <path d="M926 361L1088 521Q1098 530 1103 539" />
      </g>

      {/* crank and knob */}
      <g transform="translate(780 450) scale(.3333)" className="[&_*]:[vector-effect:non-scaling-stroke]" stroke="#f4f6fa">
        <ellipse cx="980" cy="312" rx="19" ry="40" transform="rotate(-20 980 312)" />
        <ellipse cx="980" cy="312" rx="12" ry="30" transform="rotate(-20 980 312)" stroke={SAND} />
        <ellipse cx="1090" cy="265" rx="20" ry="38" transform="rotate(-20 1090 265)" />
        <ellipse cx="1092" cy="265" rx="14" ry="28" transform="rotate(-20 1092 265)" stroke={SAND} strokeWidth="2" />
        <path d="M962 273L1075 224Q1110 228 1130 320L1125 368L1220 545L1255 570L1260 600" />
        <path d="M1100 295L1112 325L1104 368L1205 568L1235 580L1262 598M1205 568L1230 548M1104 368L1130 322" />
        <path d="M990 350L1025 390L1050 400L1145 595L1142 630L1172 690L1195 715L1290 672" />
        <path d="M1160 620L1195 678L1280 640M1172 690L1195 678L1195 715M1035 382L1050 400M1005 320L1085 290" />
        <path d="M1010 320L1035 382L1065 380L1165 590L1160 620M1145 595L1165 580M1142 630L1162 612" stroke={TAN} />
        <path d="M990 315L1110 285" stroke={TAN} />
        <g stroke="#1414c0" strokeWidth="1.400">
          <path d="M1255 590Q1270 570 1310 553M1300 677Q1335 675 1358 664M1255 590Q1260 650 1300 677M1258 605Q1280 665 1298 672" />
          <path d="M1310 553Q1360 548 1376 610Q1378 655 1358 664Q1325 640 1300 570z" />
        </g>
        <path d="M1315 553Q1355 590 1362 660" stroke={TAN} />
        <path d="M1278 612L1315 600L1325 632L1290 645zM1285 610L1298 642M1295 606L1308 640M1305 603L1316 636" stroke="#b03ccc" />
        <path d="M1262 600L1285 660L1300 668" stroke={SAND} />
      </g>

      <Plug x={1005} y={521} />
      <Plug x={1045} y={752} />
      <Plug x={848} y={846} />
      <path d="M864 762l22 8-3 10-18-4zM1048 677l20 8-3 10-18-4zM1028 552l18 10-12 12" stroke={SAND} opacity="0.8" />
      <Screw x={1032} y={558} />
      <Screw x={855} y={643} />
      <Screw x={1054} y={680} />
      <Screw x={876} y={766} />
      <path d="M847 650L872 622M866 628l8 8" stroke="#8a4a1c" />
    </svg>
  );
}

/* ---------- Right hand toolbar ---------- */

const HGrip = ({ className }: { className?: string }) => (
  <div className={clsx('h-[4px] w-full shrink-0 border-y border-dotted border-[#7088a6]', className)} />
);

function SideGroup({ names }: { names: string[] }) {
  return (
    <div className="flex flex-col pl-[5px]">
      {names.map((n) => (
        <div key={n} className="flex h-[28.1px] items-center">
          <Icon name={n} />
          {n === 'points' && (
            <svg viewBox="0 0 4 6" className="ml-[9px] h-[6px] w-[4px]">
              <path d="M0 0v6l4-3z" fill={DARK} />
            </svg>
          )}
        </div>
      ))}
    </div>
  );
}

function SideToolbar() {
  return (
    <div className="w-[41px] bg-[#dceaf3] pt-[3px]">
      <HGrip className="mb-[5px]" />
      <SideGroup names={['sketch', 'plane', 'axis', 'curve', 'points', 'csys', 'analysis']} />
      <HGrip className="mt-[4px] mb-[6px]" />
      <SideGroup names={['note', 'noteSym', 'noteOff']} />
      <HGrip className="mt-[3px] mb-[7px]" />
      <SideGroup names={['assemble', 'manikin', 'create', 'hole', 'shell', 'round', 'chamfer']} />
      <HGrip className="mt-[2px] mb-[6px]" />
      <SideGroup names={['extrude', 'revolve', 'sweep', 'boundary', 'style']} />
      <HGrip className="mt-[4px] mb-[6px]" />
      <SideGroup names={['mirror', 'merge', 'trim', 'pattern']} />
    </div>
  );
}

/* ---------- Browser window behind ---------- */

function BrowserEdge() {
  return (
    <div className="flex w-[118px] flex-col">
      <div className="flex h-[25px] justify-end bg-linear-to-b from-[#86b3cb] to-[#6fa3c0] pr-[4px]">
        <div className="flex h-[17px] w-[93px] rounded-b-[4px] border border-t-0 border-[#4f7d96] bg-[#8db8cd]">
          <svg viewBox="0 0 93 16" className="h-4 w-[93px]" fill="none" stroke="#39576a">
            <path d="M25 0v16M50 0v16" stroke="#4f7d96" />
            <rect x="7" y="8.500" width="11" height="3.500" rx="1" fill="#fff" />
            <path d="M35 2.500h8v8h-8z" fill="#fff" />
            <path d="M32 5.500h8v8h-8z" fill="#fff" />
            <path d="M34.500 8h3v3h-3z" />
            <path d="M67 3l8 9M75 3l-8 9" strokeWidth="3.500" />
            <path d="M67 3l8 9M75 3l-8 9" stroke="#fff" strokeWidth="1.800" />
          </svg>
        </div>
      </div>
      <div className="h-[60px] border-b border-[#9ab6c0] bg-linear-to-b from-[#e9f9fb] to-[#d3edf5]">
        <div className="flex h-[36px] items-center">
          <div className="flex h-[18px] w-[14px] items-center justify-end overflow-hidden bg-[#3b9ed8] pr-[2px] text-[12px] font-black text-white">M</div>
          <svg viewBox="0 0 88 22" className="ml-[13px] h-[22px] w-[88px]">
            <circle cx="10.500" cy="11" r="9" fill="#fff" stroke="#444" strokeWidth="1.500" />
            <circle cx="10.500" cy="11" r="6.500" fill="#c40a12" stroke="#701015" />
            <circle cx="12.500" cy="8.500" r="2.200" fill="#f08080" />
            <g fill="none" stroke="#ee8432">
              <path d="M36 14L51 4M37 11l14 1" strokeWidth="3" />
              <circle cx="35.500" cy="9" r="2.300" strokeWidth="1.500" />
              <circle cx="38.500" cy="16" r="2.300" strokeWidth="1.500" />
            </g>
            <path d="M70 6h11M70 11h11M70 16h11" stroke="#444" strokeWidth="3" strokeLinecap="round" />
          </svg>
        </div>
        <div className="mt-[1px] flex items-center whitespace-nowrap">
          <svg viewBox="0 0 16 14" className="ml-px h-[14px] w-[16px]">
            <path d="M1 3q0-2 2-2h4l1 2h6q1 0 1 1v8q0 1-1 1H2q-1 0-1-1z" fill="#fbd07e" stroke="#b8803a" />
          </svg>
          <span className="ml-[5px] font-['DejaVu_Sans_Condensed','DejaVu_Sans',sans-serif] text-[11px] tracking-[-0.25px] text-[#1e3c66] [font-stretch:condensed]">
            Övriga bokmärken
          </span>
        </div>
      </div>
      <div className="flex flex-1">
        <div className="flex w-[103px] flex-col bg-[#969696]">
          <div className="h-[54px] bg-[#9a9a9a]" />
          <div className="h-px bg-linear-to-r from-[#4f6a4f] from-60% to-[#a8664a] to-75%" />
          <div className="h-[101px] border-b border-[#868686] bg-[#9a9a9a]" />
        </div>
        <div className="flex-1 bg-[#f1f1f1]" />
      </div>
    </div>
  );
}

/* ---------- Taskbar ---------- */

const Chrome = () => (
  <svg viewBox="0 0 16 16" className="size-4 shrink-0">
    <circle cx="8" cy="8" r="7.500" fill="#e23b2e" />
    <path d="M8 8L1.500 4.200A7.500 7.500 0 0 0 7 15.500z" fill="#3fa648" />
    <path d="M8 8l-1 7.500A7.500 7.500 0 0 0 15 5H8z" fill="#f8cf3c" />
    <circle cx="8" cy="8" r="3.500" fill="#fff" />
    <circle cx="8" cy="8" r="2.700" fill="#3d7fd8" />
  </svg>
);

const SpotifyIcon = () => (
  <svg viewBox="0 0 16 16" className="size-4 shrink-0" fill="none">
    <circle cx="8" cy="8" r="7.500" fill="#84c41c" />
    <path d="M3.500 6q5-2 9 .5M4 8.500q4-1.500 8 .5M4.500 11q3.500-1 6.500.5" stroke="#1d2b10" strokeWidth="1.500" />
  </svg>
);

const SkypeIcon = () => (
  <div className="-ml-px flex size-4 shrink-0 items-center justify-center rounded-[5px] bg-[#12a5e8] text-[12px] font-bold text-white">S</div>
);

const MailIcon = () => (
  <svg viewBox="0 0 16 16" className="size-4 shrink-0">
    <circle cx="8" cy="8" r="7" fill="#23467c" />
    <path d="M4 8l5-3 4 3-1 5H6z" fill="#f2f4f8" />
    <path d="M2 5q5-5 11 0" stroke="#7fb0ea" strokeWidth="1.500" fill="none" />
    <circle cx="9" cy="9" r="1" fill="#222" />
  </svg>
);

const ProeIcon = () => (
  <svg viewBox="0 0 14 14" className="mr-px ml-[2px] size-[14px] shrink-0">
    <path d="M0 0h14v14H0z" fill="#1c2320" />
    <path d="M1 2h3v8h9v3H1z" fill="#e9e06a" />
    <path d="M5 1h8v8H5z" fill="#8fe6e2" />
  </svg>
);

const PsIcon = () => (
  <div className="flex size-4 shrink-0 items-center justify-center bg-[#0b3a66] text-[9px] font-bold text-[#7cc8f4]">Ps</div>
);

const tasks = [
  { label: 'Badoo – Jakob 37, H...', icon: <Chrome />, spacing: 'tracking-[0.12px]' },
  { label: 'Ny flik - Google Chrome', icon: <Chrome />, spacing: 'tracking-[-0.25px]' },
  { label: 'Spotify - The Smiths ...', icon: <SpotifyIcon />, spacing: 'tracking-[-0.05px]' },
  { label: 'Skype™ [1] - jakob303', icon: <SkypeIcon />, spacing: 'tracking-[-0.1px]', alert: true },
  { label: 'Inkorgen - Lokala ma...', icon: <MailIcon />, spacing: 'tracking-[-0.05px]' },
  { label: 'POTATISSKALARE_V...', icon: <ProeIcon />, spacing: 'tracking-[0.35px]', active: true },
  { label: 'Untitled-1 @ 66,7% (...', icon: <PsIcon />, spacing: 'tracking-[0.1px]' },
];

function Taskbar() {
  return (
    <div className="flex h-[30px] bg-linear-to-b from-[#4a90f0] via-[#245edb] via-15% to-[#1d4fc0] font-['DejaVu_Sans_Condensed','DejaVu_Sans',sans-serif] text-[11px] text-white [font-stretch:condensed]">
      <div className="flex w-[98px] items-center rounded-r-[10px] bg-linear-to-b from-[#5fb85c] via-[#379a36] via-25% to-[#2d7f2d] pl-[10px] shadow-[inset_-3px_0_5px_#1f6a20]">
        <svg viewBox="0 0 20 20" className="size-[20px]">
          <path d="M3 3q3-2 6-.5L7.500 9q-3-1-6 .5z" fill="#ee5a24" />
          <path d="M10.500 3q3 1.500 7 0L16 9.500q-4 1.500-7 0z" fill="#7cc242" />
          <path d="M1.200 11q3-1.500 6 0l-1.500 6.500q-3-1.500-6 0z" fill="#4a8fe8" />
          <path d="M8.500 11q3 1.500 7 0L14 17.500q-4 1.500-7 0z" fill="#fbc830" />
        </svg>
        <span className="-mt-px ml-[5px] font-['Open_Sans','Noto_Sans',sans-serif] text-[19px] leading-none font-bold italic tracking-[0.5px] [text-shadow:1px_1px_2px_#1c4a1c]">
          Start
        </span>
      </div>
      <div className="ml-[11px] flex items-center pt-[2px]">
        {tasks.map((t) => (
          <div
            key={t.label}
            className={clsx(
              'mr-[2px] flex h-[25px] w-[158px] items-center gap-[4px] overflow-hidden rounded-[3px] pl-[8px] whitespace-nowrap',
              t.alert && 'border border-[#f4b060] bg-[#e07a0c]',
              t.active && 'bg-[#1c4fb2] shadow-[inset_1px_1px_3px_#0f2f7c]',
              !t.alert && !t.active && 'bg-linear-to-b from-[#5c9bf8] via-[#3c81f0] via-20% to-[#3b7cee] shadow-[inset_-1px_-1px_0_#2a62d0]',
            )}
          >
            {t.icon}
            <span className={t.spacing}>{t.label}</span>
          </div>
        ))}
      </div>
      <div className="ml-auto flex w-[164px] items-center border-l border-[#0d4fa8] bg-linear-to-b from-[#3fb4f6] via-[#1294e6] via-20% to-[#0e88dc]">
        <svg viewBox="0 0 132 26" className="-ml-[12px] h-[26px] w-[132px] shrink-0">
          <circle cx="10" cy="13" r="8" fill="#2f86e8" stroke="#9fd0fa" />
          <path d="M12 9l-4 4 4 4" stroke="#fff" strokeWidth="2" fill="none" />
          <path d="M23 5h9v12h-9z" fill="#8ecf28" />
          <circle cx="30" cy="15" r="6" fill="#f0b41c" />
          <text x="27.500" y="19" fontSize="10" fontWeight="bold" fill="#6b2a00">1</text>
          <circle cx="47" cy="13" r="7.500" fill="#84c41c" />
          <path d="M42.500 11q5-2 9 .5M43 13.500q4-1.500 8 .5M43.500 16q3.500-1 6.500.5" stroke="#1d2b10" strokeWidth="1.500" fill="none" />
          <path d="M66 6l-6 12h5l5-8z" fill="#f8c82c" />
          <path d="M66 6l8 12h-5l-4-8z" fill="#3a7ad8" />
          <path d="M76 7h7v8h-7zM78 17h6v2h-6z" fill="#cfe0f0" stroke="#567" />
          <path d="M86 7q3 4 0 9M89 6q4 5 0 11" stroke="#8ce060" fill="none" />
          <path d="M95 6h8v7h-8z" fill="#33425a" stroke="#cde" />
          <path d="M102 8l6 12H96z" fill="#f8e02c" stroke="#555" />
          <path d="M102 12v4M102 17v1.500" stroke="#222" strokeWidth="1.500" />
          <path d="M113 6h6q8 2 6 8q-2 7-12 6z" fill="#f4f020" />
          <path d="M117 9v8q5 0 4.500-4q0-4-4.500-4z" fill="#4a6a20" />
        </svg>
        <span className="ml-[2px] text-[11px] tracking-[-0.2px]">13:33</span>
      </div>
    </div>
  );
}

export default function App() {
  return (
    <div className="flex h-[1080px] w-[1920px] flex-col overflow-hidden bg-[#969696] font-['Liberation_Sans',Arial,sans-serif]">
      <div className="flex h-[1050px]">
        <div className="flex w-[1802px] flex-col border-t border-r-2 border-b-2 border-t-[#d8cfc4] border-r-black border-b-black bg-[#d6d2ca] pt-[3px] pr-[3px] pb-[2px] pl-[4px]">
          <TitleBar />
          <MenuBar />
          <div className="bg-[#dceaf2]">
            <Toolbar />
          </div>
          <MessageArea />
          <div className="flex h-[868px] border-t border-white">
            <ModelTree />
            <Splitter />
            <main className="flex-1 overflow-hidden bg-linear-to-b from-[#c2d8e9] via-[#8fadcd] via-50% to-[#5c79aa]">
              <Model />
            </main>
            <SideToolbar />
          </div>
        </div>
        <BrowserEdge />
      </div>
      <Taskbar />
    </div>
  );
}
